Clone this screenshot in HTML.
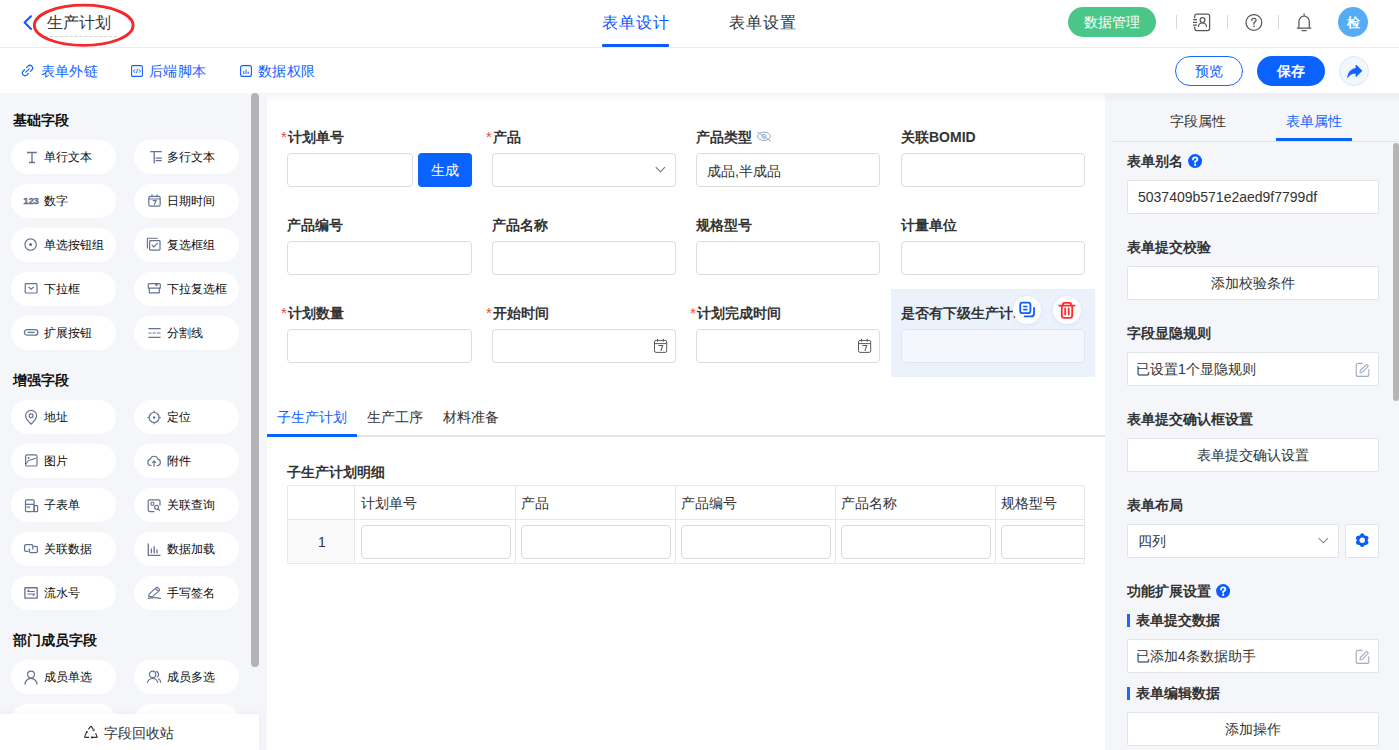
<!DOCTYPE html>
<html><head><meta charset="utf-8">
<style>
*{box-sizing:border-box;margin:0;padding:0}
html,body{width:1399px;height:750px;overflow:hidden;background:#fff;font-family:"Liberation Sans",sans-serif;color:#1f2329}
.a{position:absolute}
.t{position:absolute;white-space:nowrap;line-height:20px}
/* header */
#hdr{left:0;top:0;width:1399px;height:48px;background:#fff;border-bottom:1px solid #e9eaee}
#tb{left:0;top:48px;width:1399px;height:45px;background:#fff}
#side{left:0;top:93px;width:267px;height:657px;background:#f5f6fa}
#canvas{left:267px;top:93px;width:838px;height:657px;background:#fff}
#right{left:1105px;top:93px;width:294px;height:657px;background:#f5f6fa}
.pill{position:absolute;width:105px;height:34px;border-radius:17px;background:#fff}
.pill .ic{position:absolute;left:13px;top:10px;width:14px;height:14px;overflow:visible}
.pill .tx{position:absolute;left:33px;top:7px;font-size:12px;line-height:20px;color:#0c0c0c;white-space:nowrap}
.sect{position:absolute;left:13px;font-size:14px;font-weight:bold;line-height:20px;color:#111}
.lbl{position:absolute;font-size:14px;font-weight:bold;line-height:20px;color:#333}
.ast{position:absolute;font-size:15px;line-height:20px;color:#f04a36}
.inp{position:absolute;height:34px;border:1px solid #dcdcdc;border-radius:4px;background:#fff}
.rt{position:absolute;left:1127px;font-size:14px;font-weight:bold;line-height:20px;color:#333}
.rbox{position:absolute;left:1127px;width:252px;height:34px;border:1px solid #e2e3e7;border-radius:2px;background:#fff;font-size:14px;line-height:32px;color:#333}
</style></head><body>
<div id="hdr" class="a"></div>
<div id="tb" class="a"></div>
<div id="side" class="a"></div>
<div id="canvas" class="a"></div>
<div id="right" class="a"></div>

<!-- SIDEBAR -->
<div class="sect" style="top:110px">基础字段</div>
<div class="pill" style="left:11px;top:140px"><svg class="ic" viewBox="0 0 14 14"><path d="M3 2.5h9.8M5 12.5h6M8 2.5v10" stroke="#65738f" stroke-width="1.3" fill="none"/></svg><div class="tx">单行文本</div></div>
<div class="pill" style="left:134px;top:140px"><svg class="ic" viewBox="0 0 14 14"><path d="M3.2 1.6h11.6M7.2 1.6v11.6M8.6 8.1h6.2M8.6 10.7h6.2" stroke="#65738f" stroke-width="1.3" fill="none"/></svg><div class="tx">多行文本</div></div>
<div class="pill" style="left:11px;top:184px"><svg class="ic" viewBox="0 0 14 14"><text x="-0.7" y="9.8" font-size="9.6" font-weight="bold" fill="#65738f" stroke="#65738f" stroke-width="0.35" font-family="Liberation Sans" letter-spacing="-0.2">123</text></svg><div class="tx">数字</div></div>
<div class="pill" style="left:134px;top:184px"><svg class="ic" viewBox="0 0 14 14"><rect x="1.8" y="2.3" width="11.4" height="9.8" rx="1.6" stroke="#65738f" stroke-width="1.2" fill="none"/><path d="M1.8 5h11.4M5 0.6v2.6M10 0.6v2.6M5.7 6.6h3.4L7.2 11" stroke="#65738f" stroke-width="1.1" fill="none"/></svg><div class="tx">日期时间</div></div>
<div class="pill" style="left:11px;top:228px"><svg class="ic" viewBox="0 0 14 14"><circle cx="6.6" cy="6.55" r="5.7" stroke="#65738f" stroke-width="1.2" fill="none"/><circle cx="6.6" cy="6.55" r="1.5" fill="#65738f"/></svg><div class="tx">单选按钮组</div></div>
<div class="pill" style="left:134px;top:228px"><svg class="ic" viewBox="0 0 14 14"><path d="M0.4 10.5V0.3h10.4" stroke="#65738f" stroke-width="1.1" fill="none"/><rect x="2.6" y="2.6" width="10.4" height="9.5" rx="0.8" stroke="#65738f" stroke-width="1.2" fill="none"/><path d="M4.8 7l2 2 4-4.2" stroke="#65738f" stroke-width="1.2" fill="none"/></svg><div class="tx">复选框组</div></div>
<div class="pill" style="left:11px;top:272px"><svg class="ic" viewBox="0 0 14 14"><rect x="1.2" y="1.6" width="11.8" height="9.4" rx="0.8" stroke="#65738f" stroke-width="1.2" fill="none"/><path d="M4.6 5l2.5 2.3 2.5-2.3" stroke="#65738f" stroke-width="1.2" fill="none"/></svg><div class="tx">下拉框</div></div>
<div class="pill" style="left:134px;top:272px"><svg class="ic" viewBox="0 0 14 14"><path d="M1.3 6.2V2.4a0.8 0.8 0 0 1 .8-.8h10.4a0.8 0.8 0 0 1 .8.8v3.8zM2.3 6.2v4.6h10v-4.6M8 1.6l1.5 2 1.5-2" stroke="#65738f" stroke-width="1.2" fill="none" stroke-linejoin="round"/></svg><div class="tx">下拉复选框</div></div>
<div class="pill" style="left:11px;top:316px"><svg class="ic" viewBox="0 0 14 14"><rect x="0.4" y="3.6" width="13.4" height="5.6" rx="2.8" stroke="#65738f" stroke-width="1.3" fill="none"/><path d="M3.5 6.4h7.2" stroke="#65738f" stroke-width="1.3"/></svg><div class="tx">扩展按钮</div></div>
<div class="pill" style="left:134px;top:316px"><svg class="ic" viewBox="0 0 14 14"><path d="M1.4 2.6h12.2M1.4 11.4h12.2M1.4 7h3M5.6 7h3.2M10 7h3.6" stroke="#65738f" stroke-width="1.2" fill="none"/></svg><div class="tx">分割线</div></div>
<div class="sect" style="top:370px">增强字段</div>
<div class="pill" style="left:11px;top:400px"><svg class="ic" viewBox="0 0 14 14"><path d="M7.1 14.2C3 10.2 1.6 8 1.6 5.8A5.5 5.5 0 0 1 12.6 5.8C12.6 8 11.2 10.2 7.1 14.2Z" stroke="#65738f" stroke-width="1.2" fill="none" stroke-linejoin="round"/><circle cx="7.1" cy="5.8" r="1.9" stroke="#65738f" stroke-width="1.2" fill="none"/></svg><div class="tx">地址</div></div>
<div class="pill" style="left:134px;top:400px"><svg class="ic" viewBox="0 0 14 14"><circle cx="7.1" cy="7.5" r="5" stroke="#65738f" stroke-width="1.2" fill="none"/><circle cx="7.1" cy="7.5" r="1.2" fill="#65738f"/><path d="M7.1 0.8v2.2M7.1 12v2.2M0.4 7.5h2.2M11.6 7.5h2.2" stroke="#65738f" stroke-width="1.2"/></svg><div class="tx">定位</div></div>
<div class="pill" style="left:11px;top:444px"><svg class="ic" style="top:9px" viewBox="0 0 14 14"><rect x="1.6" y="1.8" width="11.4" height="11.2" rx="1.6" stroke="#65738f" stroke-width="1.2" fill="none"/><path d="M2.4 10.8Q3.4 7.8 5.4 7.3Q8.2 6.8 11.8 4.9" stroke="#65738f" stroke-width="1.1" fill="none"/><circle cx="4.6" cy="5" r="0.95" fill="#65738f"/></svg><div class="tx">图片</div></div>
<div class="pill" style="left:134px;top:444px"><svg class="ic" style="top:9px" viewBox="0 0 14 14"><path d="M4.6 12.5H3.6A3.2 3.2 0 0 1 3.4 6.2 3.8 3.8 0 0 1 10.8 6.2 3.2 3.2 0 0 1 10.6 12.5H9.6M7.1 8v5.8M5.2 9.8l1.9-1.9 1.9 1.9" stroke="#65738f" stroke-width="1.2" fill="none" stroke-linejoin="round"/></svg><div class="tx">附件</div></div>
<div class="pill" style="left:11px;top:488px"><svg class="ic" viewBox="0 0 14 14"><rect x="1.5" y="1.8" width="8.6" height="11.8" rx="1" stroke="#65738f" stroke-width="1.2" fill="none"/><path d="M1.5 6.4h8.6M2.6 9.2h3.4" stroke="#65738f" stroke-width="1.2" fill="none"/><rect x="10.1" y="7.6" width="3.5" height="6" rx="0.6" stroke="#65738f" stroke-width="1.2" fill="none"/></svg><div class="tx">子表单</div></div>
<div class="pill" style="left:134px;top:488px"><svg class="ic" style="top:9px" viewBox="0 0 14 14"><path d="M13 8.4V4.3a1.5 1.5 0 0 0-1.5-1.5H2.7a1.5 1.5 0 0 0-1.5 1.5v8.8a1.5 1.5 0 0 0 1.5 1.5H7.4" stroke="#65738f" stroke-width="1.2" fill="none"/><rect x="4" y="5.2" width="2.8" height="3.1" rx="0.7" stroke="#65738f" stroke-width="1.1" fill="none"/><circle cx="9.6" cy="10.3" r="2" stroke="#65738f" stroke-width="1.15" fill="none"/><path d="M11.1 11.8L13 13.8" stroke="#65738f" stroke-width="1.2"/></svg><div class="tx">关联查询</div></div>
<div class="pill" style="left:11px;top:532px"><svg class="ic" viewBox="0 0 14 14"><path d="M4.4 9.4H2a1.4 1.4 0 0 1-1.4-1.4V4a1.4 1.4 0 0 1 1.4-1.4h5.4A1.4 1.4 0 0 1 8.8 4V7.4" stroke="#65738f" stroke-width="1.3" fill="none"/><path d="M9.6 4.4H12a1.4 1.4 0 0 1 1.4 1.4v3.4a1.4 1.4 0 0 1-1.4 1.4H6.8a1.4 1.4 0 0 1-1.4-1.4V6.4" stroke="#65738f" stroke-width="1.3" fill="none"/></svg><div class="tx">关联数据</div></div>
<div class="pill" style="left:134px;top:532px"><svg class="ic" viewBox="0 0 14 14"><path d="M1.3 1.5v11.9h12.2M4.4 6.6v4.6M7.2 4.2v7M10 7.4v3.8" stroke="#65738f" stroke-width="1.3" fill="none"/></svg><div class="tx">数据加载</div></div>
<div class="pill" style="left:11px;top:576px"><svg class="ic" style="top:9px" viewBox="0 0 14 14"><rect x="0.9" y="2.7" width="12.3" height="10.4" rx="0.4" stroke="#65738f" stroke-width="1.35" fill="none"/><path d="M3.3 6.5H10.8M3.4 6.4L5.2 4.6M3.3 9H10.8M10.7 9.1L8.9 10.9" stroke="#65738f" stroke-width="1.2" fill="none"/></svg><div class="tx">流水号</div></div>
<div class="pill" style="left:134px;top:576px"><svg class="ic" viewBox="0 0 14 14"><path d="M1.6 10.4L2.3 7.9L9.3 1.6a1 1 0 0 1 1.4 0l1.6 1.6a1 1 0 0 1 0 1.4L5.2 10.9Z M8.6 2.4L11.5 5.3" stroke="#65738f" stroke-width="1.2" fill="none" stroke-linejoin="round"/><path d="M1.4 12.4Q7 11 13.4 12.4" stroke="#65738f" stroke-width="1.2" fill="none" stroke-linecap="round"/></svg><div class="tx">手写签名</div></div>
<div class="sect" style="top:630px">部门成员字段</div>
<div class="pill" style="left:11px;top:660px"><svg class="ic" viewBox="0 0 14 14"><circle cx="7" cy="4.6" r="3.4" stroke="#65738f" stroke-width="1.2" fill="none"/><path d="M0.9 14.5A6.1 6.1 0 0 1 13.1 14.5" stroke="#65738f" stroke-width="1.3" fill="none"/></svg><div class="tx">成员单选</div></div>
<div class="pill" style="left:134px;top:660px"><svg class="ic" viewBox="0 0 14 14"><circle cx="5.6" cy="4.4" r="3.2" stroke="#65738f" stroke-width="1.2" fill="none"/><path d="M0.4 12.8A5.3 5.3 0 0 1 10.8 12.8M9.2 1.4A3.2 3.2 0 0 1 10 7.3M11.4 8.4A5.3 5.3 0 0 1 13.8 12.8" stroke="#65738f" stroke-width="1.2" fill="none"/></svg><div class="tx">成员多选</div></div>
<div class="pill" style="left:11px;top:704px"></div>
<div class="pill" style="left:134px;top:704px"></div>
<div class="a" style="left:251px;top:93px;width:8px;height:574px;border-radius:4px;background:#b3b3b3"></div>
<div class="a" style="left:0;top:714px;width:259px;height:36px;background:#fff;box-shadow:0 0 8px rgba(0,0,0,0.05)"></div>
<svg class="a" style="left:84px;top:726px" width="14" height="13" viewBox="0 0 14 13"><path d="M4.4 3.4L6.4 0.6Q6.9 0 7.4 0.6L9.2 3.4M2.6 6L0.7 10.6Q0.4 11.4 1.3 11.4H5M7.6 11.4H12.6Q13.4 11.4 13 10.6L11.6 7.2" fill="none" stroke="#333" stroke-width="1.1" stroke-linejoin="round"/><path d="M8.2 4.2L10.6 2.8 10.4 5.4Z M1.6 5.6L3.8 4.8 3.6 7Z M8.4 9.8L6.6 11.4 8.4 13Z" fill="#333"/></svg>
<div class="t" style="left:104px;top:723px;font-size:14px;color:#333">字段回收站</div>

<!-- CANVAS -->
<div class="a" style="left:267px;top:93px;width:838px;height:8px;background:linear-gradient(#f4f4f6,#fdfdfd)"></div>
<div class="a" style="left:891px;top:289px;width:204px;height:88px;background:#ebf2fc"></div>
<div class="ast" style="left:281px;top:127px">*</div><div class="lbl" style="left:288px;top:127px">计划单号</div>
<div class="inp" style="left:287px;top:153px;width:126px"></div>
<div class="a" style="left:418px;top:153px;width:54px;height:34px;border-radius:4px;background:#0a63ff;color:#fff;font-size:14px;line-height:34px;text-align:center">生成</div>
<div class="ast" style="left:486px;top:127px">*</div><div class="lbl" style="left:493px;top:127px">产品</div>
<div class="inp" style="left:492px;top:153px;width:184px"></div>
<div class="lbl" style="left:696px;top:127px">产品类型</div>
<div class="inp" style="left:696px;top:153px;width:184px"></div>
<div class="lbl" style="left:901px;top:127px">关联BOMID</div>
<div class="inp" style="left:901px;top:153px;width:184px"></div>
<div class="lbl" style="left:287px;top:215px">产品编号</div>
<div class="inp" style="left:287px;top:241px;width:185px"></div>
<div class="lbl" style="left:492px;top:215px">产品名称</div>
<div class="inp" style="left:492px;top:241px;width:184px"></div>
<div class="lbl" style="left:696px;top:215px">规格型号</div>
<div class="inp" style="left:696px;top:241px;width:184px"></div>
<div class="lbl" style="left:901px;top:215px">计量单位</div>
<div class="inp" style="left:901px;top:241px;width:184px"></div>
<div class="ast" style="left:281px;top:303px">*</div><div class="lbl" style="left:288px;top:303px">计划数量</div>
<div class="inp" style="left:287px;top:329px;width:185px"></div>
<div class="ast" style="left:486px;top:303px">*</div><div class="lbl" style="left:493px;top:303px">开始时间</div>
<div class="inp" style="left:492px;top:329px;width:184px"></div>
<div class="ast" style="left:690px;top:303px">*</div><div class="lbl" style="left:697px;top:303px">计划完成时间</div>
<div class="inp" style="left:696px;top:329px;width:184px"></div>
<div class="lbl" style="left:901px;top:303px">是否有下级生产计.</div>
<div class="inp" style="left:901px;top:329px;width:184px;background:#f4f7fd;border-color:#e1e7f0"></div>
<svg class="a" style="left:654px;top:165px" width="12" height="10" viewBox="0 0 12 10"><path d="M1.8 2.2L6.4 6.8L11 2.2" stroke="#6b7488" stroke-width="1.1" fill="none"/></svg>
<svg class="a" style="left:756px;top:131px" width="16" height="12" viewBox="0 0 16 12"><ellipse cx="8" cy="5.3" rx="6.4" ry="4.1" stroke="#8ea5cc" stroke-width="1" fill="none"/><circle cx="8" cy="5.3" r="1.9" stroke="#8ea5cc" stroke-width="1" fill="none"/><path d="M1.6 1.1L14.6 10" stroke="#8ea5cc" stroke-width="1"/></svg>
<div class="t" style="left:707px;top:161px;font-size:14px;color:#333">成品,半成品</div>
<svg class="a" style="left:653px;top:338px" width="16" height="16" viewBox="0 0 16 16"><rect x="1.5" y="2.4" width="12.2" height="12" rx="1.6" stroke="#5a5a5a" stroke-width="1" fill="none"/><path d="M1.5 5.6h12.2M4.5 0.8v3M10.3 0.8v3" stroke="#5a5a5a" stroke-width="1" fill="none"/><path d="M5.4 7.5h4.3L7.9 12.9" stroke="#5a5a5a" stroke-width="1.05" fill="none"/></svg>
<svg class="a" style="left:857px;top:338px" width="16" height="16" viewBox="0 0 16 16"><rect x="1.5" y="2.4" width="12.2" height="12" rx="1.6" stroke="#5a5a5a" stroke-width="1" fill="none"/><path d="M1.5 5.6h12.2M4.5 0.8v3M10.3 0.8v3" stroke="#5a5a5a" stroke-width="1" fill="none"/><path d="M5.4 7.5h4.3L7.9 12.9" stroke="#5a5a5a" stroke-width="1.05" fill="none"/></svg>
<div class="a" style="left:1013px;top:296px;width:28px;height:28px;border-radius:50%;background:#fff;box-shadow:0 1px 4px rgba(40,90,200,.10)"></div><div class="a" style="left:1053px;top:296px;width:28px;height:28px;border-radius:50%;background:#fff;box-shadow:0 1px 4px rgba(40,90,200,.10)"></div><svg class="a" style="left:1005px;top:290px" width="85" height="40" viewBox="1005 290 85 40"><rect x="1020.2" y="302.6" width="10.2" height="10.6" rx="2.2" fill="none" stroke="#0d5eff" stroke-width="1.8"/><path d="M1023.2 306.5h4.2M1023.2 309.7h4.2" stroke="#0d5eff" stroke-width="1.7"/><path d="M1024.6 316.4h6.4a3 3 0 0 0 3-3v-5.6" fill="none" stroke="#0d5eff" stroke-width="1.8" stroke-linecap="round"/><path d="M1059.2 305.6h15.4M1062.9 305.4v-1.2a1.4 1.4 0 0 1 1.4-1.4h5.3a1.4 1.4 0 0 1 1.4 1.4v1.2M1061.8 305.8v9.6a2.4 2.4 0 0 0 2.4 2.4h5.6a2.4 2.4 0 0 0 2.4-2.4v-9.6M1065.2 308.5v6M1068.7 308.5v6" fill="none" stroke="#ff2b2b" stroke-width="1.8" stroke-linecap="round"/></svg>

<div class="a" style="left:267px;top:435px;width:838px;height:2px;background:#e4e4e4"></div>
<div class="a" style="left:267px;top:434px;width:90px;height:3px;background:#0a63ff"></div>
<div class="t" style="left:277px;top:407px;font-size:14px;color:#0e62ff">子生产计划</div>
<div class="t" style="left:367px;top:407px;font-size:14px;color:#333">生产工序</div>
<div class="t" style="left:443px;top:407px;font-size:14px;color:#333">材料准备</div>
<div class="lbl" style="left:287px;top:462px">子生产计划明细</div>
<div class="a" style="left:287px;top:485px;width:798px;height:79px;border:1px solid #e8e8e8;border-radius:2px;overflow:hidden"><div class="a" style="left:0;top:33px;width:66px;height:44px;background:#fafafa"></div><div class="a" style="left:0;top:33px;width:798px;height:1px;background:#e8e8e8"></div><div class="a" style="left:66px;top:0;width:1px;height:77px;background:#e8e8e8"></div><div class="a" style="left:227px;top:0;width:1px;height:77px;background:#e8e8e8"></div><div class="a" style="left:387px;top:0;width:1px;height:77px;background:#e8e8e8"></div><div class="a" style="left:547px;top:0;width:1px;height:77px;background:#e8e8e8"></div><div class="a" style="left:707px;top:0;width:1px;height:77px;background:#e8e8e8"></div><div class="t" style="left:30px;top:46px;font-size:14px;color:#333">1</div><div class="t" style="left:73px;top:7px;font-size:14px;color:#333">计划单号</div><div class="inp" style="left:73px;top:39px;width:150px"></div><div class="t" style="left:233px;top:7px;font-size:14px;color:#333">产品</div><div class="inp" style="left:233px;top:39px;width:150px"></div><div class="t" style="left:393px;top:7px;font-size:14px;color:#333">产品编号</div><div class="inp" style="left:393px;top:39px;width:150px"></div><div class="t" style="left:553px;top:7px;font-size:14px;color:#333">产品名称</div><div class="inp" style="left:553px;top:39px;width:150px"></div><div class="t" style="left:713px;top:7px;font-size:14px;color:#333">规格型号</div><div class="inp" style="left:713px;top:39px;width:150px"></div></div>

<!-- RIGHT -->
<div class="a" style="left:1105px;top:93px;width:294px;height:8px;background:linear-gradient(#eeeff3,#f1f2f6)"></div>
<div class="t" style="left:1170px;top:111px;font-size:14px;color:#333">字段属性</div>
<div class="t" style="left:1286px;top:111px;font-size:14px;color:#0e62ff">表单属性</div>
<div class="a" style="left:1113px;top:141px;width:286px;height:1px;background:#e2e4e9"></div>
<div class="a" style="left:1276px;top:138px;width:76px;height:3px;background:#0a63ff"></div>
<div class="a" style="left:1393px;top:143px;width:6px;height:258px;border-radius:3px;background:#b5b5b5"></div>
<div class="rt" style="top:151px">表单别名</div>
<svg class="a" style="left:1188px;top:154px" width="15" height="15" viewBox="0 0 15 15"><circle cx="7.1" cy="7.1" r="7" fill="#0a5cff"/><path d="M5 5.6Q5 3.3 7.2 3.3Q9.4 3.3 9.4 5.3Q9.4 6.5 7.2 7.6L7.2 8.6" fill="none" stroke="#fff" stroke-width="1.8" stroke-linecap="round"/><circle cx="7.2" cy="10.9" r="1.1" fill="#fff"/></svg>
<div class="rbox" style="top:180px;padding-left:10px">5037409b571e2aed9f7799df</div>
<div class="rt" style="top:237px">表单提交校验</div>
<div class="rbox" style="top:266px;text-align:center">添加校验条件</div>
<div class="rt" style="top:323px">字段显隐规则</div>
<div class="rbox" style="top:352px;padding-left:8px">已设置1个显隐规则</div>
<svg class="a" style="left:1355px;top:362px" width="15" height="15" viewBox="0 0 15 15"><path d="M7.6 1.4H3.2a2 2 0 0 0-2 2v9a2 2 0 0 0 2 2h8.6a2 2 0 0 0 2-2V7.2" stroke="#a3adc4" stroke-width="1.15" fill="none"/><path d="M4.9 10.8l.5-2.3 6.2-6.2 1.8 1.8-6.2 6.2z" stroke="#a3adc4" stroke-width="1.1" fill="none" stroke-linejoin="round"/></svg>
<div class="rt" style="top:409px">表单提交确认框设置</div>
<div class="rbox" style="top:438px;text-align:center">表单提交确认设置</div>
<div class="rt" style="top:495px">表单布局</div>
<div class="rbox" style="top:524px;width:212px;padding-left:10px">四列</div>
<svg class="a" style="left:1317px;top:536px" width="12" height="10" viewBox="0 0 12 10"><path d="M1.8 2.2L6.4 6.8L11 2.2" stroke="#7d869b" stroke-width="1.1" fill="none"/></svg>
<div class="rbox" style="top:524px;left:1345px;width:34px"></div>
<svg class="a" style="left:1354px;top:532px" width="17" height="17" viewBox="0 0 17 17"><polygon points="8.20,3.00 12.70,5.60 12.70,10.80 8.20,13.40 3.70,10.80 3.70,5.60" fill="#0a5cff" stroke="#0a5cff" stroke-width="3.4" stroke-linejoin="round"/><circle cx="15.20" cy="8.20" r="1.5" fill="#fff"/><circle cx="11.70" cy="14.26" r="1.5" fill="#fff"/><circle cx="4.70" cy="14.26" r="1.5" fill="#fff"/><circle cx="1.20" cy="8.20" r="1.5" fill="#fff"/><circle cx="4.70" cy="2.14" r="1.5" fill="#fff"/><circle cx="11.70" cy="2.14" r="1.5" fill="#fff"/><circle cx="8.2" cy="8.2" r="2.7" fill="#fff"/></svg>
<div class="rt" style="top:581px">功能扩展设置</div>
<svg class="a" style="left:1216px;top:584px" width="15" height="15" viewBox="0 0 15 15"><circle cx="7.1" cy="7.1" r="7" fill="#0a5cff"/><path d="M5 5.6Q5 3.3 7.2 3.3Q9.4 3.3 9.4 5.3Q9.4 6.5 7.2 7.6L7.2 8.6" fill="none" stroke="#fff" stroke-width="1.8" stroke-linecap="round"/><circle cx="7.2" cy="10.9" r="1.1" fill="#fff"/></svg>
<div class="a" style="left:1127px;top:614px;width:3px;height:13px;background:#1a66ff"></div>
<div class="rt" style="left:1136px;top:610px">表单提交数据</div>
<div class="rbox" style="top:639px;padding-left:8px">已添加4条数据助手</div>
<svg class="a" style="left:1355px;top:649px" width="15" height="15" viewBox="0 0 15 15"><path d="M7.6 1.4H3.2a2 2 0 0 0-2 2v9a2 2 0 0 0 2 2h8.6a2 2 0 0 0 2-2V7.2" stroke="#a3adc4" stroke-width="1.15" fill="none"/><path d="M4.9 10.8l.5-2.3 6.2-6.2 1.8 1.8-6.2 6.2z" stroke="#a3adc4" stroke-width="1.1" fill="none" stroke-linejoin="round"/></svg>
<div class="a" style="left:1127px;top:687px;width:3px;height:13px;background:#1a66ff"></div>
<div class="rt" style="left:1136px;top:683px">表单编辑数据</div>
<div class="rbox" style="top:712px;text-align:center">添加操作</div>
<!-- HEADER -->
<svg class="a" style="left:21px;top:14px" width="14" height="18" viewBox="0 0 14 18"><path d="M10 2.3 L3.6 8.6 L10 14.9" fill="none" stroke="#0a5cff" stroke-width="2.1" stroke-linecap="round" stroke-linejoin="round"/></svg>
<div class="t" style="left:47px;top:12px;font-size:16px;line-height:22px;color:#333">生产计划</div>
<div class="a" style="left:45px;top:36px;width:72px;border-top:1px dashed #d4d4d4"></div>
<svg class="a" style="left:32px;top:3px" width="104" height="46" viewBox="0 0 104 46"><ellipse cx="51.7" cy="22.3" rx="49.4" ry="20.1" fill="none" stroke="#f5282c" stroke-width="2.8"/></svg>
<div class="t" style="left:602px;top:12px;font-size:16px;line-height:22px;color:#0a58ff;letter-spacing:1px">表单设计</div>
<div class="a" style="left:602px;top:43.5px;width:67px;height:3.5px;background:#0a5cff;border-radius:1px"></div>
<div class="t" style="left:729px;top:12px;font-size:16px;line-height:22px;color:#333;letter-spacing:1px">表单设置</div>
<div class="a" style="left:1068px;top:7px;width:88px;height:30px;border-radius:15px;background:#4ac688;color:#fff;font-size:14px;line-height:30px;text-align:center">数据管理</div>
<div class="a" style="left:1176px;top:15px;width:1px;height:14px;background:#d8d8d8"></div>
<div class="a" style="left:1227px;top:15px;width:1px;height:14px;background:#d8d8d8"></div>
<div class="a" style="left:1278px;top:15px;width:1px;height:14px;background:#d8d8d8"></div>
<svg class="a" style="left:1192px;top:13px" width="20" height="19" viewBox="0 0 20 19"><path d="M2.7 5.2V3a2 2 0 0 1 2-2H15.6a2 2 0 0 1 2 2V15.6a2 2 0 0 1-2 2H4.7a2 2 0 0 1-2-2V13.4" fill="none" stroke="#585858" stroke-width="1.25"/><path d="M1 6.6h4M1 9.4h4M1 12.2h4" stroke="#585858" stroke-width="1.2"/><circle cx="10.5" cy="7.1" r="2.4" fill="none" stroke="#585858" stroke-width="1.25"/><path d="M6.4 13.9A4.05 4.05 0 0 1 14.5 13.9" fill="none" stroke="#585858" stroke-width="1.25"/></svg>
<svg class="a" style="left:1245px;top:14px" width="18" height="18" viewBox="0 0 18 18"><circle cx="8.9" cy="8.5" r="7.9" fill="none" stroke="#585858" stroke-width="1.25"/><path d="M6.8 6.5Q6.8 4.4 9 4.4Q11.1 4.4 11.1 6.3Q11.1 7.6 9 8.6L9 10.2" fill="none" stroke="#585858" stroke-width="1.3" stroke-linecap="round"/><circle cx="9" cy="12.3" r="0.85" fill="#585858"/></svg>
<svg class="a" style="left:1296px;top:13px" width="16" height="19" viewBox="0 0 16 19"><path d="M8.1 0.8V2.2M2.9 14.8V8.4A5.2 5.2 0 0 1 13.3 8.4V14.8M1.3 15H14.9M6 17.6H10.2" fill="none" stroke="#585858" stroke-width="1.25" stroke-linecap="round"/></svg>
<div class="a" style="left:1338px;top:7px;width:30px;height:30px;border-radius:50%;background:#55acf2;color:#fff;font-size:12.5px;font-weight:bold;line-height:32px;text-align:center">检</div>
<!-- TOOLBAR -->
<svg class="a" style="left:21px;top:64px" width="13" height="13" viewBox="0 0 13 13"><path d="M5.6 3.6L7 2.2A2.6 2.6 0 0 1 10.8 6L9.4 7.4M7.4 9.4L6 10.8A2.6 2.6 0 0 1 2.2 7L3.6 5.6M4.8 8.2L8.2 4.8" fill="none" stroke="#1062ff" stroke-width="1.2" stroke-linecap="round"/></svg>
<div class="t" style="left:40.5px;top:61px;font-size:14px;color:#1062ff;letter-spacing:0.4px">表单外链</div>
<svg class="a" style="left:131px;top:65px" width="12" height="12" viewBox="0 0 12 12"><rect x="0.6" y="0.6" width="10.8" height="10.8" rx="1.2" fill="none" stroke="#1062ff" stroke-width="1.1"/><path d="M4 4.2L2.5 6 4 7.8M8 4.2L9.5 6 8 7.8M6.8 3.8L5.2 8.2" fill="none" stroke="#1062ff" stroke-width="0.9"/></svg>
<div class="t" style="left:149px;top:61px;font-size:14px;color:#1062ff;letter-spacing:0.4px">后端脚本</div>
<svg class="a" style="left:240px;top:65px" width="12" height="12" viewBox="0 0 12 12"><rect x="0.6" y="0.6" width="10.8" height="10.8" rx="2" fill="none" stroke="#1062ff" stroke-width="1.1"/><path d="M3.8 6v3M6 4.5v4.5M8.2 6.5v2.5" stroke="#1062ff" stroke-width="1"/></svg>
<div class="t" style="left:258px;top:61px;font-size:14px;color:#1062ff;letter-spacing:0.4px">数据权限</div>
<div class="a" style="left:1175px;top:56px;width:68px;height:30px;border:1px solid #1a66ff;border-radius:15px;color:#0a5cff;font-size:14px;line-height:28px;text-align:center">预览</div>
<div class="a" style="left:1257px;top:56px;width:68px;height:30px;border-radius:15px;background:#0a63ff;color:#fff;font-size:14px;font-weight:bold;line-height:30px;text-align:center">保存</div>
<div class="a" style="left:1339px;top:56px;width:30px;height:30px;border-radius:50%;background:#f2f6fe;border:1px solid #dde6fb"></div>
<svg class="a" style="left:1345.5px;top:63px" width="17" height="16" viewBox="0 0 17 16"><path d="M10 2 L16 7.8 L10 13.6 L10 10.2 Q4.5 10 1.6 14.5 Q2.5 6.2 10 5.4 Z" fill="#1062ff" stroke="#1062ff" stroke-width="0.8" stroke-linejoin="round"/></svg>

</body></html>
